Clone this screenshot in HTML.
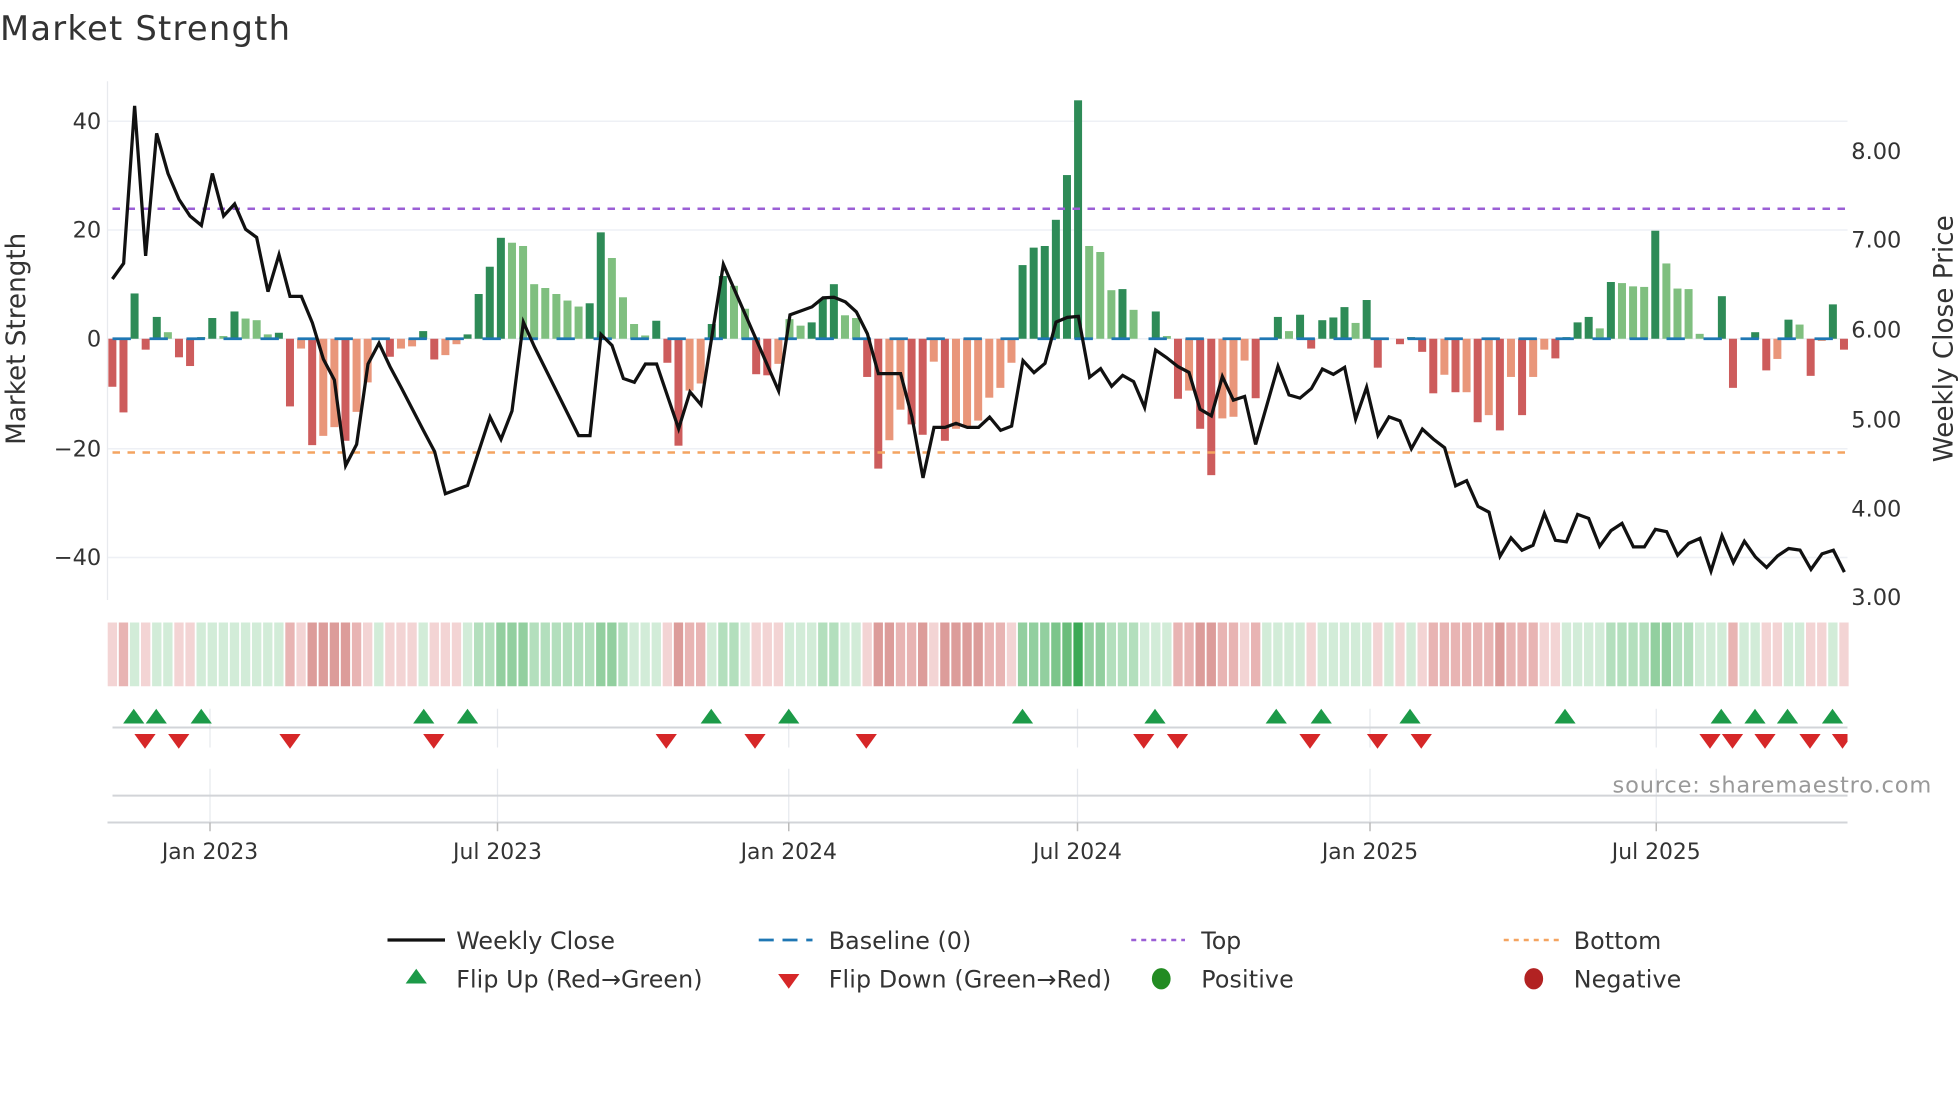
<!DOCTYPE html>
<html><head><meta charset="utf-8"><style>
html,body{margin:0;padding:0;background:#fff;}
svg{display:block;font-family:"DejaVu Sans","Liberation Sans",sans-serif;}
</style></head><body>
<svg width="1960" height="1102" viewBox="0 0 1568 881.6" xmlns="http://www.w3.org/2000/svg">
<defs>
<path id="tu" d="M-8.5 5.8L0 -6L8.5 5.8Z" fill="#1c9a48"/>
<path id="td" d="M-8.5 -5.8L8.5 -5.8L0 6Z" fill="#d62728"/>
</defs>
<rect width="1568" height="881.6" fill="#fff"/>
<text x="0" y="32" font-size="27" fill="#333" textLength="232">Market Strength</text>

<g stroke="#eef0f5" stroke-width="1.2">
<line x1="86" x2="1478" y1="97" y2="97"/><line x1="86" x2="1478" y1="184" y2="184"/><line x1="86" x2="1478" y1="271" y2="271"/><line x1="86" x2="1478" y1="359" y2="359"/><line x1="86" x2="1478" y1="446" y2="446"/>
</g>
<line x1="86" x2="86" y1="65" y2="480" stroke="#e8eaee" stroke-width="1"/>
<g font-size="18" fill="#333" text-anchor="end">
<text x="81" y="103">40</text><text x="81" y="190">20</text><text x="81" y="277">0</text><text x="81" y="365">−20</text><text x="81" y="452">−40</text>
</g>
<text transform="translate(20,271) rotate(-90)" font-size="21" fill="#333" text-anchor="middle">Market Strength</text>
<g font-size="18" fill="#333">
<text x="1481" y="127">8.00</text><text x="1481" y="198">7.00</text><text x="1481" y="270">6.00</text><text x="1481" y="342">5.00</text><text x="1481" y="413">4.00</text><text x="1481" y="484">3.00</text>
</g>
<text transform="translate(1562,271) rotate(-90)" font-size="21" fill="#333" text-anchor="middle">Weekly Close Price</text>

<g transform="translate(89.9,271) scale(8.88,-4.365)">
<g fill="#cd5c5c">
<rect x="-0.36" width=".72" y="-8.8" height="8.8"/>
<rect x="0.64" width=".72" y="-13.5" height="13.5"/>
<rect x="2.64" width=".72" y="-2" height="2"/>
<rect x="5.64" width=".72" y="-3.4" height="3.4"/>
<rect x="6.64" width=".72" y="-5" height="5"/>
<rect x="15.64" width=".72" y="-12.4" height="12.4"/>
<rect x="17.64" width=".72" y="-19.5" height="19.5"/>
<rect x="20.64" width=".72" y="-18.7" height="18.7"/>
<rect x="24.64" width=".72" y="-3.3" height="3.3"/>
<rect x="28.64" width=".72" y="-3.8" height="3.8"/>
<rect x="49.64" width=".72" y="-4.4" height="4.4"/>
<rect x="50.64" width=".72" y="-19.6" height="19.6"/>
<rect x="57.64" width=".72" y="-6.5" height="6.5"/>
<rect x="58.64" width=".72" y="-6.7" height="6.7"/>
<rect x="67.64" width=".72" y="-7" height="7"/>
<rect x="68.64" width=".72" y="-23.8" height="23.8"/>
<rect x="71.64" width=".72" y="-15.7" height="15.7"/>
<rect x="72.64" width=".72" y="-17.6" height="17.6"/>
<rect x="74.64" width=".72" y="-18.7" height="18.7"/>
<rect x="95.64" width=".72" y="-11" height="11"/>
<rect x="97.64" width=".72" y="-16.5" height="16.5"/>
<rect x="98.64" width=".72" y="-25" height="25"/>
<rect x="102.64" width=".72" y="-10.9" height="10.9"/>
<rect x="107.64" width=".72" y="-1.8" height="1.8"/>
<rect x="113.64" width=".72" y="-5.3" height="5.3"/>
<rect x="115.64" width=".72" y="-1" height="1"/>
<rect x="117.64" width=".72" y="-2.4" height="2.4"/>
<rect x="118.64" width=".72" y="-10" height="10"/>
<rect x="120.64" width=".72" y="-9.8" height="9.8"/>
<rect x="122.64" width=".72" y="-15.3" height="15.3"/>
<rect x="124.64" width=".72" y="-16.8" height="16.8"/>
<rect x="126.64" width=".72" y="-14" height="14"/>
<rect x="129.64" width=".72" y="-3.6" height="3.6"/>
<rect x="145.64" width=".72" y="-9" height="9"/>
<rect x="148.64" width=".72" y="-5.8" height="5.8"/>
<rect x="152.64" width=".72" y="-6.8" height="6.8"/>
<rect x="155.64" width=".72" y="-2" height="2"/>
</g>
<g fill="#e9967a">
<rect x="16.64" width=".72" y="-1.8" height="1.8"/>
<rect x="18.64" width=".72" y="-17.8" height="17.8"/>
<rect x="19.64" width=".72" y="-16.2" height="16.2"/>
<rect x="21.64" width=".72" y="-13.4" height="13.4"/>
<rect x="22.64" width=".72" y="-8" height="8"/>
<rect x="25.64" width=".72" y="-1.8" height="1.8"/>
<rect x="26.64" width=".72" y="-1.4" height="1.4"/>
<rect x="29.64" width=".72" y="-3" height="3"/>
<rect x="30.64" width=".72" y="-1" height="1"/>
<rect x="51.64" width=".72" y="-9.5" height="9.5"/>
<rect x="52.64" width=".72" y="-8.2" height="8.2"/>
<rect x="59.64" width=".72" y="-4.6" height="4.6"/>
<rect x="69.64" width=".72" y="-18.6" height="18.6"/>
<rect x="70.64" width=".72" y="-13" height="13"/>
<rect x="73.64" width=".72" y="-4.2" height="4.2"/>
<rect x="75.64" width=".72" y="-16.5" height="16.5"/>
<rect x="76.64" width=".72" y="-16" height="16"/>
<rect x="77.64" width=".72" y="-15" height="15"/>
<rect x="78.64" width=".72" y="-10.8" height="10.8"/>
<rect x="79.64" width=".72" y="-9" height="9"/>
<rect x="80.64" width=".72" y="-4.4" height="4.4"/>
<rect x="96.64" width=".72" y="-9.5" height="9.5"/>
<rect x="99.64" width=".72" y="-14.6" height="14.6"/>
<rect x="100.64" width=".72" y="-14.3" height="14.3"/>
<rect x="101.64" width=".72" y="-4" height="4"/>
<rect x="119.64" width=".72" y="-6.6" height="6.6"/>
<rect x="121.64" width=".72" y="-9.8" height="9.8"/>
<rect x="123.64" width=".72" y="-14" height="14"/>
<rect x="125.64" width=".72" y="-7" height="7"/>
<rect x="127.64" width=".72" y="-7" height="7"/>
<rect x="128.64" width=".72" y="-2" height="2"/>
<rect x="149.64" width=".72" y="-3.7" height="3.7"/>
<rect x="153.64" width=".72" y="-0.4" height="0.4"/>
</g>
<g fill="#2e8b57">
<rect x="1.64" width=".72" y="0" height="8.3"/>
<rect x="3.64" width=".72" y="0" height="4"/>
<rect x="7.64" width=".72" y="0" height="0.3"/>
<rect x="8.64" width=".72" y="0" height="3.8"/>
<rect x="10.64" width=".72" y="0" height="5"/>
<rect x="14.64" width=".72" y="0" height="1.1"/>
<rect x="27.64" width=".72" y="0" height="1.4"/>
<rect x="31.64" width=".72" y="0" height="0.8"/>
<rect x="32.64" width=".72" y="0" height="8.2"/>
<rect x="33.64" width=".72" y="0" height="13.2"/>
<rect x="34.64" width=".72" y="0" height="18.5"/>
<rect x="42.64" width=".72" y="0" height="6.5"/>
<rect x="43.64" width=".72" y="0" height="19.5"/>
<rect x="48.64" width=".72" y="0" height="3.3"/>
<rect x="53.64" width=".72" y="0" height="2.7"/>
<rect x="54.64" width=".72" y="0" height="11.5"/>
<rect x="62.64" width=".72" y="0" height="3"/>
<rect x="63.64" width=".72" y="0" height="7.3"/>
<rect x="64.64" width=".72" y="0" height="10"/>
<rect x="81.64" width=".72" y="0" height="13.5"/>
<rect x="82.64" width=".72" y="0" height="16.7"/>
<rect x="83.64" width=".72" y="0" height="17"/>
<rect x="84.64" width=".72" y="0" height="21.8"/>
<rect x="85.64" width=".72" y="0" height="30"/>
<rect x="86.64" width=".72" y="0" height="43.7"/>
<rect x="90.64" width=".72" y="0" height="9.1"/>
<rect x="93.64" width=".72" y="0" height="5"/>
<rect x="104.64" width=".72" y="0" height="4"/>
<rect x="106.64" width=".72" y="0" height="4.4"/>
<rect x="108.64" width=".72" y="0" height="3.4"/>
<rect x="109.64" width=".72" y="0" height="3.9"/>
<rect x="110.64" width=".72" y="0" height="5.8"/>
<rect x="112.64" width=".72" y="0" height="7.1"/>
<rect x="116.64" width=".72" y="0" height="0.3"/>
<rect x="130.64" width=".72" y="0" height="0.3"/>
<rect x="131.64" width=".72" y="0" height="3"/>
<rect x="132.64" width=".72" y="0" height="4"/>
<rect x="134.64" width=".72" y="0" height="10.4"/>
<rect x="138.64" width=".72" y="0" height="19.8"/>
<rect x="144.64" width=".72" y="0" height="7.8"/>
<rect x="147.64" width=".72" y="0" height="1.2"/>
<rect x="150.64" width=".72" y="0" height="3.5"/>
<rect x="154.64" width=".72" y="0" height="6.3"/>
</g>
<g fill="#7fbf7f">
<rect x="4.64" width=".72" y="0" height="1.2"/>
<rect x="9.64" width=".72" y="0" height="0.5"/>
<rect x="11.64" width=".72" y="0" height="3.7"/>
<rect x="12.64" width=".72" y="0" height="3.4"/>
<rect x="13.64" width=".72" y="0" height="0.8"/>
<rect x="35.64" width=".72" y="0" height="17.6"/>
<rect x="36.64" width=".72" y="0" height="17"/>
<rect x="37.64" width=".72" y="0" height="10"/>
<rect x="38.64" width=".72" y="0" height="9.3"/>
<rect x="39.64" width=".72" y="0" height="8.2"/>
<rect x="40.64" width=".72" y="0" height="7"/>
<rect x="41.64" width=".72" y="0" height="5.9"/>
<rect x="44.64" width=".72" y="0" height="14.8"/>
<rect x="45.64" width=".72" y="0" height="7.6"/>
<rect x="46.64" width=".72" y="0" height="2.7"/>
<rect x="47.64" width=".72" y="0" height="0.6"/>
<rect x="55.64" width=".72" y="0" height="9.7"/>
<rect x="56.64" width=".72" y="0" height="5.5"/>
<rect x="60.64" width=".72" y="0" height="3.6"/>
<rect x="61.64" width=".72" y="0" height="2.4"/>
<rect x="65.64" width=".72" y="0" height="4.3"/>
<rect x="66.64" width=".72" y="0" height="3.8"/>
<rect x="87.64" width=".72" y="0" height="17"/>
<rect x="88.64" width=".72" y="0" height="15.9"/>
<rect x="89.64" width=".72" y="0" height="8.9"/>
<rect x="91.64" width=".72" y="0" height="5.3"/>
<rect x="94.64" width=".72" y="0" height="0.5"/>
<rect x="105.64" width=".72" y="0" height="1.4"/>
<rect x="111.64" width=".72" y="0" height="2.9"/>
<rect x="133.64" width=".72" y="0" height="1.9"/>
<rect x="135.64" width=".72" y="0" height="10.2"/>
<rect x="136.64" width=".72" y="0" height="9.6"/>
<rect x="137.64" width=".72" y="0" height="9.5"/>
<rect x="139.64" width=".72" y="0" height="13.8"/>
<rect x="140.64" width=".72" y="0" height="9.2"/>
<rect x="141.64" width=".72" y="0" height="9.1"/>
<rect x="142.64" width=".72" y="0" height="0.9"/>
<rect x="151.64" width=".72" y="0" height="2.6"/>
</g>
</g>

<line x1="90" x2="1478" y1="271" y2="271" stroke="#1f77b4" stroke-width="2.2" stroke-dasharray="14.7 14.9"/>
<line x1="90" x2="1478" y1="167" y2="167" stroke="#9b5fd6" stroke-width="2" stroke-dasharray="6 6"/>
<line x1="90" x2="1478" y1="362" y2="362" stroke="#f4a460" stroke-width="2" stroke-dasharray="6 6"/>

<polyline fill="none" stroke="#111" stroke-width="2.6" points="89.9,223.2 98.9,210.7 107.7,84.7 116.5,204.7 125.3,106.7 134.4,138.8 143.2,159.5 152,172.8 161.1,180.3 169.9,138.8 178.9,172.8 187.7,163.2 196.5,183.5 205.3,189.9 214.4,233.3 223.2,203.8 232,237.1 241.1,237.1 249.9,258.3 258.7,287.3 267.5,304 276.5,372.5 285.3,355.5 294.4,291.2 303.2,274.5 312,293.3 321.1,310.3 329.9,327.3 338.7,344.3 347.7,361.3 356.3,395 374.1,388.3 382.9,361.3 392,333.5 400.8,351.5 409.6,328.8 418.7,257.7 427.5,277.3 462.9,348.5 472,348.5 480.8,267.5 489.6,276.3 498.7,302.8 507.5,305.8 516.3,291.2 525.3,291.2 542.9,343 552,313.5 560.8,323.8 578.7,211.5 622.9,312.7 632,251.9 640.8,248.7 649.6,245.5 658.4,238.3 667.2,237.8 676.3,241.5 685.1,249.5 693.9,267 702.7,298.9 720.5,298.9 729.6,333.7 738.4,382.3 747.2,341.9 756,341.9 764.8,338.7 773.9,341.9 782.9,341.9 791.7,333.7 800.5,344.3 809.3,340.9 818.4,288.5 827.2,298.1 836,290.7 844.8,257.7 853.9,253.9 862.7,253.1 871.7,301.8 880.5,294.9 889.3,309 898.1,300.3 906.9,305.3 915.7,326 924.5,280 933.3,286.1 942.4,293.3 951.2,297.9 960,327.3 969.1,332.7 977.9,301.2 986.7,320.1 995.7,317.2 1004.5,355.5 1022.4,293 1031.2,315.9 1040,318.5 1049.1,310.9 1057.9,295.2 1066.7,299.5 1075.7,293.9 1084.5,335.3 1093.3,309.8 1102.4,348.3 1111.2,333.5 1120,336.7 1129.1,359 1137.9,343.3 1146.7,351.3 1155.7,358.2 1164.5,388.7 1173.3,384.5 1182.4,405.1 1191.2,409.7 1200,445 1208.8,430.3 1217.6,440.2 1226.4,436.2 1235.5,410.7 1244.3,432.2 1253.1,433.5 1262.1,411.5 1270.9,414.7 1279.7,437 1288.8,424.5 1297.6,418.7 1306.7,437.5 1315.5,437.5 1324.3,423.5 1333.3,425.3 1342.1,444.2 1350.9,434.7 1360,430.7 1368.8,456.9 1377.6,428.5 1386.7,450 1395.5,433 1404.3,445.5 1413.3,454 1422.1,444.7 1430.9,438.8 1440,440.1 1448.8,455.5 1457.6,443.1 1466.7,440.2 1475.5,457.7"/>

<g transform="translate(89.9,0) scale(8.88,1)">
<g fill="#f3d4d4"><rect x="-0.42" y="498" width=".84" height="51"/><rect x="2.58" y="498" width=".84" height="51"/><rect x="5.58" y="498" width=".84" height="51"/><rect x="16.58" y="498" width=".84" height="51"/><rect x="24.58" y="498" width=".84" height="51"/><rect x="25.58" y="498" width=".84" height="51"/><rect x="26.58" y="498" width=".84" height="51"/><rect x="28.58" y="498" width=".84" height="51"/><rect x="29.58" y="498" width=".84" height="51"/><rect x="30.58" y="498" width=".84" height="51"/><rect x="49.58" y="498" width=".84" height="51"/><rect x="59.58" y="498" width=".84" height="51"/><rect x="73.58" y="498" width=".84" height="51"/><rect x="80.58" y="498" width=".84" height="51"/><rect x="101.58" y="498" width=".84" height="51"/><rect x="107.58" y="498" width=".84" height="51"/><rect x="113.58" y="498" width=".84" height="51"/><rect x="115.58" y="498" width=".84" height="51"/><rect x="117.58" y="498" width=".84" height="51"/><rect x="128.58" y="498" width=".84" height="51"/><rect x="129.58" y="498" width=".84" height="51"/><rect x="148.58" y="498" width=".84" height="51"/><rect x="149.58" y="498" width=".84" height="51"/><rect x="153.58" y="498" width=".84" height="51"/><rect x="155.58" y="498" width=".84" height="51"/><rect x="6.58" y="498" width=".84" height="51"/><rect x="22.58" y="498" width=".84" height="51"/><rect x="57.58" y="498" width=".84" height="51"/><rect x="58.58" y="498" width=".84" height="51"/><rect x="67.58" y="498" width=".84" height="51"/><rect x="152.58" y="498" width=".84" height="51"/></g>
<g fill="#e8b4b3"><rect x="0.58" y="498" width=".84" height="51"/><rect x="15.58" y="498" width=".84" height="51"/><rect x="21.58" y="498" width=".84" height="51"/><rect x="51.58" y="498" width=".84" height="51"/><rect x="52.58" y="498" width=".84" height="51"/><rect x="70.58" y="498" width=".84" height="51"/><rect x="71.58" y="498" width=".84" height="51"/><rect x="78.58" y="498" width=".84" height="51"/><rect x="79.58" y="498" width=".84" height="51"/><rect x="95.58" y="498" width=".84" height="51"/><rect x="96.58" y="498" width=".84" height="51"/><rect x="99.58" y="498" width=".84" height="51"/><rect x="100.58" y="498" width=".84" height="51"/><rect x="102.58" y="498" width=".84" height="51"/><rect x="118.58" y="498" width=".84" height="51"/><rect x="119.58" y="498" width=".84" height="51"/><rect x="120.58" y="498" width=".84" height="51"/><rect x="121.58" y="498" width=".84" height="51"/><rect x="122.58" y="498" width=".84" height="51"/><rect x="123.58" y="498" width=".84" height="51"/><rect x="125.58" y="498" width=".84" height="51"/><rect x="126.58" y="498" width=".84" height="51"/><rect x="127.58" y="498" width=".84" height="51"/><rect x="145.58" y="498" width=".84" height="51"/></g>
<g fill="#dc9c9a"><rect x="17.58" y="498" width=".84" height="51"/><rect x="18.58" y="498" width=".84" height="51"/><rect x="19.58" y="498" width=".84" height="51"/><rect x="20.58" y="498" width=".84" height="51"/><rect x="50.58" y="498" width=".84" height="51"/><rect x="68.58" y="498" width=".84" height="51"/><rect x="69.58" y="498" width=".84" height="51"/><rect x="72.58" y="498" width=".84" height="51"/><rect x="74.58" y="498" width=".84" height="51"/><rect x="75.58" y="498" width=".84" height="51"/><rect x="76.58" y="498" width=".84" height="51"/><rect x="77.58" y="498" width=".84" height="51"/><rect x="97.58" y="498" width=".84" height="51"/><rect x="98.58" y="498" width=".84" height="51"/><rect x="124.58" y="498" width=".84" height="51"/></g>
<g fill="#d2ecd8"><rect x="1.58" y="498" width=".84" height="51"/><rect x="3.58" y="498" width=".84" height="51"/><rect x="4.58" y="498" width=".84" height="51"/><rect x="7.58" y="498" width=".84" height="51"/><rect x="8.58" y="498" width=".84" height="51"/><rect x="9.58" y="498" width=".84" height="51"/><rect x="10.58" y="498" width=".84" height="51"/><rect x="11.58" y="498" width=".84" height="51"/><rect x="12.58" y="498" width=".84" height="51"/><rect x="13.58" y="498" width=".84" height="51"/><rect x="14.58" y="498" width=".84" height="51"/><rect x="23.58" y="498" width=".84" height="51"/><rect x="27.58" y="498" width=".84" height="51"/><rect x="31.58" y="498" width=".84" height="51"/><rect x="46.58" y="498" width=".84" height="51"/><rect x="47.58" y="498" width=".84" height="51"/><rect x="48.58" y="498" width=".84" height="51"/><rect x="53.58" y="498" width=".84" height="51"/><rect x="56.58" y="498" width=".84" height="51"/><rect x="60.58" y="498" width=".84" height="51"/><rect x="61.58" y="498" width=".84" height="51"/><rect x="62.58" y="498" width=".84" height="51"/><rect x="65.58" y="498" width=".84" height="51"/><rect x="66.58" y="498" width=".84" height="51"/><rect x="92.58" y="498" width=".84" height="51"/><rect x="93.58" y="498" width=".84" height="51"/><rect x="94.58" y="498" width=".84" height="51"/><rect x="103.58" y="498" width=".84" height="51"/><rect x="104.58" y="498" width=".84" height="51"/><rect x="105.58" y="498" width=".84" height="51"/><rect x="106.58" y="498" width=".84" height="51"/><rect x="108.58" y="498" width=".84" height="51"/><rect x="109.58" y="498" width=".84" height="51"/><rect x="110.58" y="498" width=".84" height="51"/><rect x="111.58" y="498" width=".84" height="51"/><rect x="112.58" y="498" width=".84" height="51"/><rect x="114.58" y="498" width=".84" height="51"/><rect x="116.58" y="498" width=".84" height="51"/><rect x="130.58" y="498" width=".84" height="51"/><rect x="131.58" y="498" width=".84" height="51"/><rect x="132.58" y="498" width=".84" height="51"/><rect x="133.58" y="498" width=".84" height="51"/><rect x="142.58" y="498" width=".84" height="51"/><rect x="143.58" y="498" width=".84" height="51"/><rect x="146.58" y="498" width=".84" height="51"/><rect x="147.58" y="498" width=".84" height="51"/><rect x="150.58" y="498" width=".84" height="51"/><rect x="151.58" y="498" width=".84" height="51"/><rect x="154.58" y="498" width=".84" height="51"/><rect x="144.58" y="498" width=".84" height="51"/></g>
<g fill="#b3dfbd"><rect x="32.58" y="498" width=".84" height="51"/><rect x="33.58" y="498" width=".84" height="51"/><rect x="37.58" y="498" width=".84" height="51"/><rect x="38.58" y="498" width=".84" height="51"/><rect x="39.58" y="498" width=".84" height="51"/><rect x="40.58" y="498" width=".84" height="51"/><rect x="41.58" y="498" width=".84" height="51"/><rect x="42.58" y="498" width=".84" height="51"/><rect x="45.58" y="498" width=".84" height="51"/><rect x="54.58" y="498" width=".84" height="51"/><rect x="55.58" y="498" width=".84" height="51"/><rect x="63.58" y="498" width=".84" height="51"/><rect x="64.58" y="498" width=".84" height="51"/><rect x="89.58" y="498" width=".84" height="51"/><rect x="90.58" y="498" width=".84" height="51"/><rect x="91.58" y="498" width=".84" height="51"/><rect x="134.58" y="498" width=".84" height="51"/><rect x="135.58" y="498" width=".84" height="51"/><rect x="136.58" y="498" width=".84" height="51"/><rect x="137.58" y="498" width=".84" height="51"/><rect x="140.58" y="498" width=".84" height="51"/><rect x="141.58" y="498" width=".84" height="51"/></g>
<g fill="#92cf9f"><rect x="34.58" y="498" width=".84" height="51"/><rect x="35.58" y="498" width=".84" height="51"/><rect x="36.58" y="498" width=".84" height="51"/><rect x="43.58" y="498" width=".84" height="51"/><rect x="44.58" y="498" width=".84" height="51"/><rect x="81.58" y="498" width=".84" height="51"/><rect x="82.58" y="498" width=".84" height="51"/><rect x="83.58" y="498" width=".84" height="51"/><rect x="87.58" y="498" width=".84" height="51"/><rect x="88.58" y="498" width=".84" height="51"/><rect x="138.58" y="498" width=".84" height="51"/><rect x="139.58" y="498" width=".84" height="51"/></g>
<rect x="84.58" y="498" width=".84" height="51" fill="#7cc58b"/>
<rect x="85.58" y="498" width=".84" height="51" fill="#6bbd7b"/>
<rect x="86.58" y="498" width=".84" height="51" fill="#3ca956"/>
</g>

<g stroke="#e6e9ee" stroke-width="1">
<line x1="168" x2="168" y1="567" y2="598"/><line x1="398" x2="398" y1="567" y2="598"/><line x1="631" x2="631" y1="567" y2="598"/><line x1="862" x2="862" y1="567" y2="598"/><line x1="1096" x2="1096" y1="567" y2="598"/><line x1="1325" x2="1325" y1="567" y2="598"/>
<line x1="168" x2="168" y1="615" y2="657"/><line x1="398" x2="398" y1="615" y2="657"/><line x1="631" x2="631" y1="615" y2="657"/><line x1="862" x2="862" y1="615" y2="657"/><line x1="1096" x2="1096" y1="615" y2="657"/><line x1="1325" x2="1325" y1="615" y2="657"/>
</g>
<line x1="90" x2="1478" y1="582" y2="582" stroke="#d2d4d8" stroke-width="1.6"/>
<line x1="90" x2="1478" y1="636.5" y2="636.5" stroke="#d2d4d8" stroke-width="1.6"/>
<line x1="86" x2="1478" y1="658" y2="658" stroke="#d2d4d8" stroke-width="1.6"/>
<g stroke="#bbb" stroke-width="1.2">
<line x1="168" x2="168" y1="658" y2="665"/><line x1="398" x2="398" y1="658" y2="665"/><line x1="631" x2="631" y1="658" y2="665"/><line x1="862" x2="862" y1="658" y2="665"/><line x1="1096" x2="1096" y1="658" y2="665"/><line x1="1325" x2="1325" y1="658" y2="665"/>
</g>
<use href="#tu" x="107" y="573"/><use href="#tu" x="125" y="573"/><use href="#tu" x="161" y="573"/><use href="#tu" x="339" y="573"/><use href="#tu" x="374" y="573"/><use href="#tu" x="569" y="573"/><use href="#tu" x="631" y="573"/><use href="#tu" x="818" y="573"/><use href="#tu" x="924" y="573"/><use href="#tu" x="1021" y="573"/><use href="#tu" x="1057" y="573"/><use href="#tu" x="1128" y="573"/><use href="#tu" x="1252" y="573"/><use href="#tu" x="1377" y="573"/><use href="#tu" x="1404" y="573"/><use href="#tu" x="1430" y="573"/><use href="#tu" x="1466" y="573"/>
<use href="#td" x="116" y="593"/><use href="#td" x="143" y="593"/><use href="#td" x="232" y="593"/><use href="#td" x="347" y="593"/><use href="#td" x="533" y="593"/><use href="#td" x="604" y="593"/><use href="#td" x="693" y="593"/><use href="#td" x="915" y="593"/><use href="#td" x="942" y="593"/><use href="#td" x="1048" y="593"/><use href="#td" x="1102" y="593"/><use href="#td" x="1137" y="593"/><use href="#td" x="1368" y="593"/><use href="#td" x="1386" y="593"/><use href="#td" x="1412" y="593"/><use href="#td" x="1448" y="593"/>
<svg x="1462" y="585" width="16" height="16" viewBox="0 0 16 16" overflow="hidden"><path d="M3.5 2.2L20.5 2.2L12 14Z" fill="#d62728"/></svg>
<text x="1545" y="634" font-size="18" fill="#999" text-anchor="end" textLength="255">source: sharemaestro.com</text>

<g font-size="17.5" fill="#333" text-anchor="middle">
<text x="168" y="687">Jan 2023</text><text x="398" y="687">Jul 2023</text><text x="631" y="687">Jan 2024</text><text x="862" y="687">Jul 2024</text><text x="1096" y="687">Jan 2025</text><text x="1325" y="687">Jul 2025</text>
</g>

<line x1="310" x2="356" y1="752" y2="752" stroke="#111" stroke-width="2.6"/>
<line x1="607" x2="650" y1="752" y2="752" stroke="#1f77b4" stroke-width="2.2" stroke-dasharray="12 7"/>
<line x1="905" x2="948" y1="752" y2="752" stroke="#9b5fd6" stroke-width="2" stroke-dasharray="4 4"/>
<line x1="1203" x2="1247" y1="752" y2="752" stroke="#f4a460" stroke-width="2" stroke-dasharray="4 4"/>
<use href="#tu" x="333" y="781"/>
<use href="#td" x="631" y="785"/>
<ellipse cx="929" cy="783" rx="7.5" ry="8.5" fill="#228b22"/>
<ellipse cx="1227" cy="783" rx="7.5" ry="8.5" fill="#b22222"/>
<g font-size="19" fill="#333">
<text x="365" y="759" textLength="127">Weekly Close</text>
<text x="663" y="759" textLength="114">Baseline (0)</text>
<text x="961" y="759" textLength="32">Top</text>
<text x="1259" y="759" textLength="70">Bottom</text>
<text x="365" y="790" textLength="197">Flip Up (Red→Green)</text>
<text x="663" y="790" textLength="226">Flip Down (Green→Red)</text>
<text x="961" y="790" textLength="74">Positive</text>
<text x="1259" y="790" textLength="86">Negative</text>
</g>
</svg>
</body></html>
